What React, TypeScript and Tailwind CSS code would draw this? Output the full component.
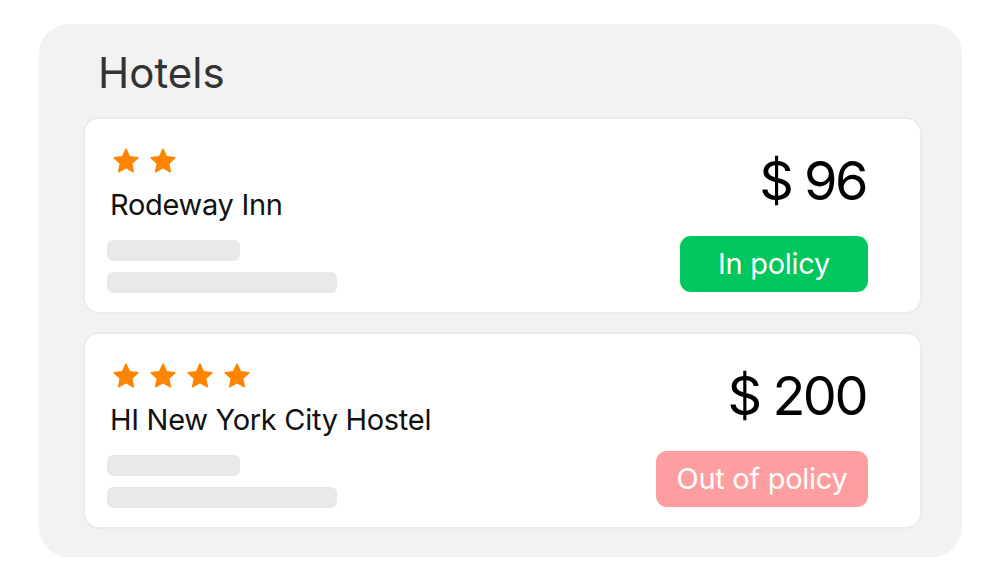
import React from "react";

interface Hotel {
  name: string;
  stars: number;
  price: number;
  inPolicy: boolean;
}

const hotels: Hotel[] = [
  { name: "Rodeway Inn", stars: 2, price: 96, inPolicy: true },
  { name: "HI New York City Hostel", stars: 4, price: 200, inPolicy: false },
];

const Star = () => (
  <svg width="28" height="28" viewBox="0 0 24 24" className="shrink-0">
    <path
      d="M12 1.8l3.05 6.6 7.2.85-5.33 4.92 1.42 7.13L12 17.72l-6.34 3.58 1.42-7.13L1.75 9.25l7.2-.85z"
      fill="#ff8400"
      stroke="#ff8400"
      strokeWidth="1.2"
      strokeLinejoin="round"
    />
  </svg>
);

const HotelCard: React.FC<{ hotel: Hotel }> = ({ hotel }) => (
  <div className="h-[197px] bg-white border-2 border-[#ebebeb] rounded-[16px] flex justify-between pl-[22px] pr-[52px]">
    <div className="flex flex-col">
      <div className="flex gap-[9px] mt-[28px] pl-[5px]">
        {Array.from({ length: hotel.stars }).map((_, i) => (
          <Star key={i} />
        ))}
      </div>
      <div className="text-[29px] leading-none text-[#111] mt-[15px] pl-[3px] tracking-[-0.3px]">
        {hotel.name}
      </div>
      <div className="w-[133px] h-[21px] rounded-[6px] bg-[#e9e9e9] mt-[21px]" />
      <div className="w-[230px] h-[21px] rounded-[6px] bg-[#e9e9e9] mt-[11px]" />
    </div>
    <div className="flex flex-col items-end">
      <div className="text-[54px] leading-none text-black mt-[35px] tracking-[-2.5px] pr-[2px]">
        $ {hotel.price}
      </div>
      {hotel.inPolicy ? (
        <div className="mt-[28px] h-[56px] w-[188px] rounded-[11px] bg-[#00c65e] text-white text-[29px] tracking-[-0.3px] flex items-center justify-center">
          In policy
        </div>
      ) : (
        <div className="mt-[28px] h-[56px] w-[212px] rounded-[11px] bg-[#ff9ea0] text-white text-[29px] tracking-[-0.3px] flex items-center justify-center">
          Out of policy
        </div>
      )}
    </div>
  </div>
);

export default function App() {
  return (
    <div
      className="w-[1000px] h-[582px] bg-white pt-[24px] pl-[39px]"
      style={{ fontFamily: "Inter, 'Noto Sans', sans-serif" }}
    >
      <div className="w-[923px] h-[533px] bg-[#f2f2f2] rounded-[30px] pl-[44px] pr-[40px] pt-[28px]">
        <h1 className="text-[42px] leading-none text-[#333] pl-[15px] font-normal">
          Hotels
        </h1>
        <div className="flex flex-col gap-[18px] mt-[23px]">
          {hotels.map((h) => (
            <HotelCard key={h.name} hotel={h} />
          ))}
        </div>
      </div>
    </div>
  );
}
